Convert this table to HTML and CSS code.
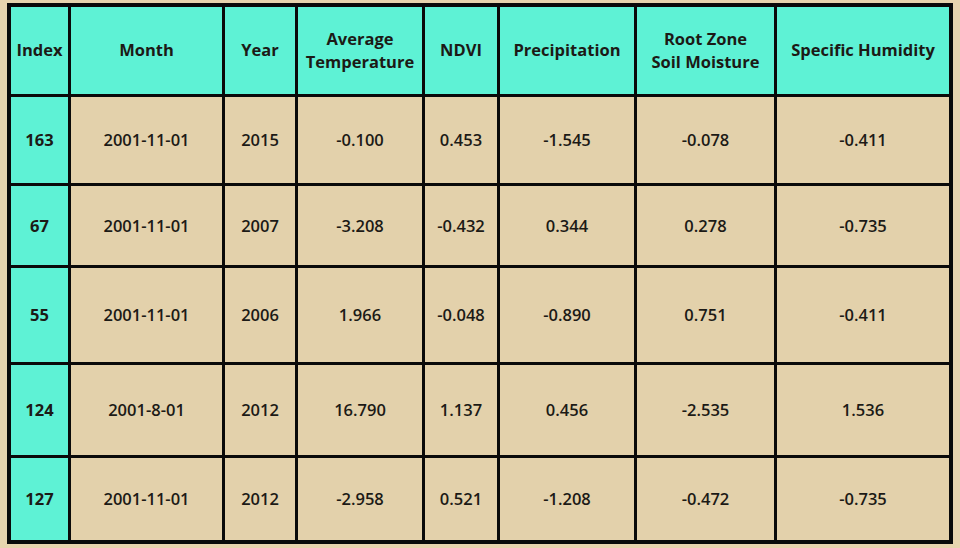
FILE: index.html
```html
<!DOCTYPE html>
<html lang="en">
<head>
<meta charset="utf-8">
<title>Data table</title>
<link rel="stylesheet" href="styles.css">
</head>
<body>
<table class="data">
  <colgroup>
    <col class="c-index">
    <col class="c-month">
    <col class="c-year">
    <col class="c-temp">
    <col class="c-ndvi">
    <col class="c-precip">
    <col class="c-root">
    <col class="c-hum">
  </colgroup>
  <thead>
    <tr class="r-head">
      <th>Index</th>
      <th>Month</th>
      <th>Year</th>
      <th>Average<br>Temperature</th>
      <th>NDVI</th>
      <th>Precipitation</th>
      <th>Root Zone<br>Soil Moisture</th>
      <th>Specific Humidity</th>
    </tr>
  </thead>
  <tbody>
    <tr class="r1">
      <th>163</th><td>2001-11-01</td><td>2015</td><td>-0.100</td><td>0.453</td><td>-1.545</td><td>-0.078</td><td>-0.411</td>
    </tr>
    <tr class="r2">
      <th>67</th><td>2001-11-01</td><td>2007</td><td>-3.208</td><td>-0.432</td><td>0.344</td><td>0.278</td><td>-0.735</td>
    </tr>
    <tr class="r3">
      <th>55</th><td>2001-11-01</td><td>2006</td><td>1.966</td><td>-0.048</td><td>-0.890</td><td>0.751</td><td>-0.411</td>
    </tr>
    <tr class="r4">
      <th>124</th><td>2001-8-01</td><td>2012</td><td>16.790</td><td>1.137</td><td>0.456</td><td>-2.535</td><td>1.536</td>
    </tr>
    <tr class="r5">
      <th>127</th><td>2001-11-01</td><td>2012</td><td>-2.958</td><td>0.521</td><td>-1.208</td><td>-0.472</td><td>-0.735</td>
    </tr>
  </tbody>
</table>
</body>
</html>
```
FILE: styles.css
```css
html, body {
  margin: 0;
  padding: 0;
  background: #e7d4ae;
}

body {
  font-family: "Open Sans", "Noto Sans", sans-serif;
  color: #1c1a16;
}

.data {
  margin: 3px 0 0 7px;
  width: 946px;
  table-layout: fixed;
  border-collapse: separate;
  border-spacing: 3px;
  padding: 1px;
  background: #0a0a0a;
}

.c-index { width: 57px; }
.c-month { width: 151px; }
.c-year { width: 70px; }
.c-temp { width: 124px; }
.c-ndvi { width: 72px; }
.c-precip { width: 134px; }
.c-root { width: 137px; }
.c-hum { width: 172px; }

.data th,
.data td {
  padding: 0;
  text-align: center;
  vertical-align: middle;
  font-size: 16.5px;
  line-height: 20px;
}

.data thead th {
  background: #5ef2d5;
  font-weight: 700;
  line-height: 23px;
  padding-bottom: 2px;
}

.data tbody th {
  background: #5ef2d5;
  font-weight: 700;
}

.data td {
  background: #e3d1ab;
  font-weight: 600;
}

.r-head { height: 87px; }
.r1 { height: 86px; }
.r2 { height: 79px; }
.r3 { height: 94px; }
.r4 { height: 90px; }
.r5 { height: 82px; }
```
